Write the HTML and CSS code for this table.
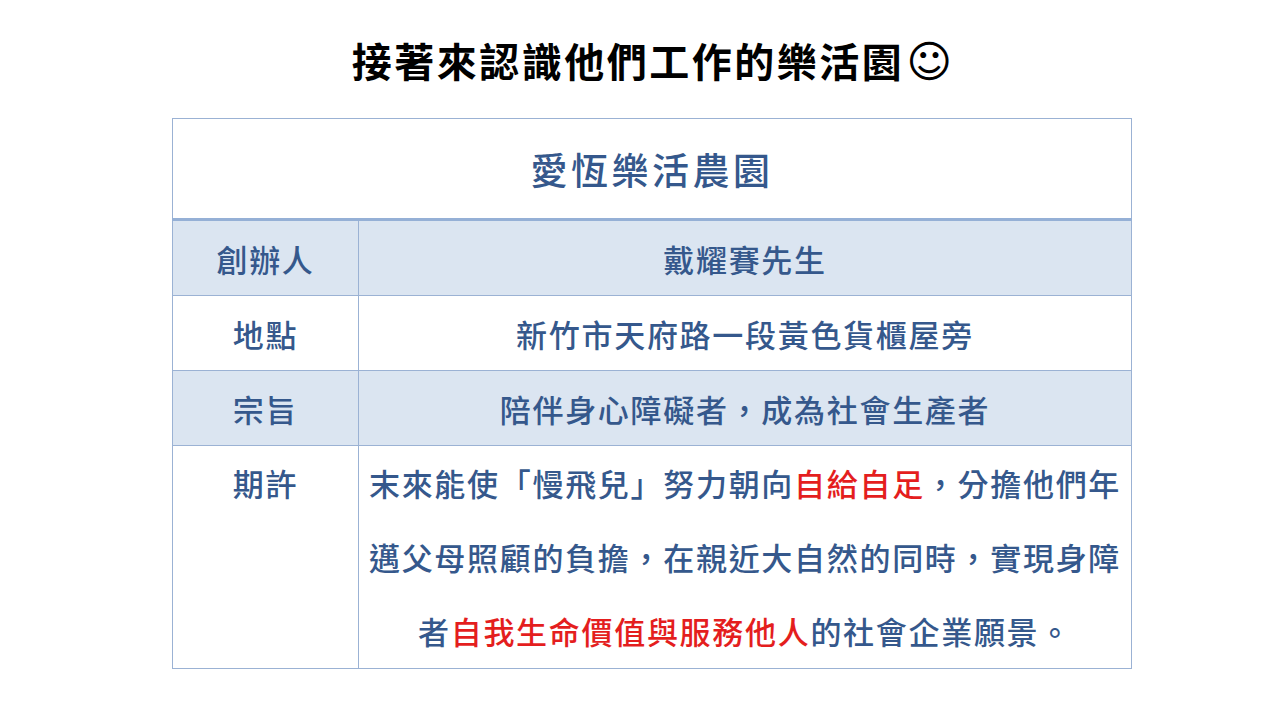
FILE: index.html
```html
<!DOCTYPE html>
<html lang="zh-Hant-TW">
<head>
<meta charset="utf-8">
<link rel="stylesheet" href="styles.css">
</head>
<body>
<main class="page">
  <h1 class="title">接著來認識他們工作的樂活園<span class="smile">☺</span></h1>
  <table class="info">
    <colgroup>
      <col class="col-label">
      <col class="col-value">
    </colgroup>
    <thead>
      <tr class="head-row"><th colspan="2">愛恆樂活農園</th></tr>
    </thead>
    <tbody>
      <tr class="row shaded"><td class="label">創辦人</td><td class="value">戴耀賽先生</td></tr>
      <tr class="row"><td class="label">地點</td><td class="value">新竹市天府路一段黃色貨櫃屋旁</td></tr>
      <tr class="row shaded"><td class="label">宗旨</td><td class="value">陪伴身心障礙者，成為社會生產者</td></tr>
      <tr class="row tall"><td class="label">期許</td><td class="value long">末來能使「慢飛兒」努力朝向<span class="red">自給自足</span>，分擔他們年<br>邁父母照顧的負擔，在親近大自然的同時，實現身障<br>者<span class="red">自我生命價值與服務他人</span>的社會企業願景。</td></tr>
    </tbody>
  </table>
</main>
</body>
</html>
```

FILE: styles.css
```css
html, body {
  margin: 0;
  padding: 0;
  background: #ffffff;
}
body {
  width: 1280px;
  height: 720px;
  overflow: hidden;
  font-family: "Noto Sans CJK TC", "Noto Sans", sans-serif;
}
.page {
  display: flex;
  flex-direction: column;
  align-items: center;
  padding-left: 24px;
}
.title {
  margin: 36px 0 0 0;
  height: 82px;
  font-size: 40px;
  line-height: 48px;
  font-weight: 700;
  letter-spacing: 2.5px;
  color: #000000;
  white-space: nowrap;
}
.smile {
  font-family: "DejaVu Sans", sans-serif;
  font-weight: 400;
  font-size: 44px;
  letter-spacing: 0;
  margin-left: 2px;
}
.info {
  width: 960px;
  border-collapse: collapse;
  border: 1px solid #9bb2d4;
  color: #35588c;
  font-size: 31px;
  font-weight: 500;
  letter-spacing: 1.7px;
}
.col-label { width: 186px; }
.info th {
  height: 99px;
  font-size: 37px;
  letter-spacing: 3.5px;
  font-weight: 500;
  text-align: center;
  border-bottom: 3px solid #95b0d6;
  padding: 0;
}
.info td {
  border: 1px solid #9bb2d4;
  text-align: center;
  padding: 0;
  height: 74px;
}
.shaded td { background: #dbe5f1; }
.tall td {
  vertical-align: top;
  line-height: 74px;
  height: 222px;
}
.red { color: #e41e1e; }
```
